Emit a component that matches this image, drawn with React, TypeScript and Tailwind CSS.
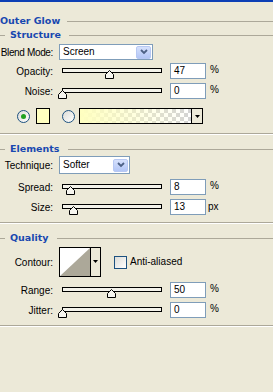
import React from "react";

const LABEL = "w-[53px] shrink-0 text-right whitespace-nowrap";

function Header({ title, lead, gap }: { title: string; lead?: boolean; gap: number }) {
  return (
    <div className="flex items-center h-[14px]">
      {lead && <div className="w-[5px] h-px bg-[#aca899] mr-[5px]" />}
      <span className="font-['DejaVu_Sans',Verdana,sans-serif] font-bold text-[9.5px] leading-none text-[#1848b0] whitespace-nowrap">
        {title}
      </span>
      <div className={gap === 7 ? "flex-1 h-px bg-[#aca899] ml-[7px]" : "flex-1 h-px bg-[#aca899] ml-[8px]"} />
    </div>
  );
}

function Thumb() {
  return (
    <svg width="9" height="9" viewBox="0 0 9 9" className="block">
      <path d="M0.5 8.5 V4.5 L4.5 0.5 L8.5 4.5 V8.5 Z" fill="#f6f5ef" stroke="#000" strokeWidth="1" />
    </svg>
  );
}

function Slider({ pos }: { pos: number }) {
  return (
    <div className="relative w-[100px] h-[16px] ml-[9px] shrink-0">
      <div className="mt-[5px] h-[5px] border border-black bg-[#f3f2ea]" />
      <div className="absolute top-[7px]" style={{ left: pos - 4 }}>
        <Thumb />
      </div>
    </div>
  );
}

function NumInput({ value }: { value: string }) {
  return (
    <div className="ml-[8px] w-[36px] h-[16px] shrink-0 border border-[#7f9db9] bg-white pl-[3px] flex items-center leading-none">
      {value}
    </div>
  );
}

function SliderRow({ label, pos, value, unit }: { label: string; pos: number; value: string; unit: string }) {
  return (
    <div className="flex items-center h-[16px]">
      <div className={LABEL}>{label}</div>
      <Slider pos={pos} />
      <NumInput value={value} />
      <span className={unit === "%" ? "ml-[4px] -mt-[3px] leading-none" : "ml-[2px] -mt-[1px] leading-none"}>{unit}</span>
    </div>
  );
}

function ComboArrow() {
  return (
    <div className="w-[15px] h-[13px] mr-px rounded-[2px] border border-[#b7c8f3] bg-gradient-to-b from-[#d6e1fc] to-[#b3c6f6] flex items-center justify-center">
      <svg width="8" height="6" viewBox="0 0 8 6">
        <path d="M1 1 L4 4 L7 1" fill="none" stroke="#4d6185" strokeWidth="1.8" />
      </svg>
    </div>
  );
}

function Select({ value, width, h }: { value: string; width: string; h: string }) {
  return (
    <div className={`ml-[6px] ${width} ${h} border border-[#7f9db9] bg-white flex items-center justify-between pl-[3px]`}>
      <span className="leading-none">{value}</span>
      <ComboArrow />
    </div>
  );
}

function Radio({ checked }: { checked?: boolean }) {
  return (
    <div className="w-[13px] h-[13px] rounded-full border border-[#1c5180] bg-gradient-to-br from-[#dcdcd7] to-white flex items-center justify-center shrink-0">
      {checked && <div className="w-[5px] h-[5px] rounded-full bg-[#21a121]" />}
    </div>
  );
}

function Separator() {
  return (
    <div className="flex flex-col">
      <div className="h-px bg-[#aca899]" />
      <div className="h-px bg-white" />
    </div>
  );
}

function TriDown() {
  return (
    <svg width="5" height="3" viewBox="0 0 5 3">
      <path d="M0 0 H5 L2.5 3 Z" fill="#000" />
    </svg>
  );
}

export default function App() {
  return (
    <div className="w-[273px] h-[392px] bg-[#ece9d8] overflow-hidden font-['Liberation_Sans',Arial,sans-serif] text-[10px] text-black flex flex-col">
      <div className="h-[2px] bg-[#0d3fb5]" />
      <div className="mt-[12px]">
        <Header title="Outer Glow" gap={7} />
      </div>
      <Header title="Structure" lead gap={8} />

      <div className="mt-[2px] flex items-center h-[16px]">
        <div className={`${LABEL} tracking-[-0.35px]`}>Blend Mode:</div>
        <Select value="Screen" width="w-[94px]" h="h-[16px]" />
      </div>

      <div className="mt-[3px]">
        <SliderRow label="Opacity:" pos={47} value="47" unit="%" />
      </div>
      <div className="mt-[4px]">
        <SliderRow label="Noise:" pos={0} value="0" unit="%" />
      </div>

      <div className="mt-[9px] h-[16px] flex items-center">
        <div className="ml-[17px]">
          <Radio checked />
        </div>
        <div className="ml-[6px] w-[14px] h-[16px] border border-black bg-[#ffffc0]" />
        <div className="ml-[12px]">
          <Radio />
        </div>
        <div className="ml-[4px] w-[124px] h-[16px] border border-black flex">
          <div className="flex-1 bg-[image:conic-gradient(#d4d4d4_25%,#ffffff_0_50%,#d4d4d4_0_75%,#ffffff_0)] bg-[length:8px_8px]">
            <div className="w-full h-full bg-gradient-to-r from-[#ffffc0] via-[#ffffc0]/50 to-transparent" />
          </div>
          <div className="w-[11px] border-l border-black bg-[#ece9d8] flex items-center justify-center">
            <TriDown />
          </div>
        </div>
      </div>

      <div className="mt-[9px]">
        <Separator />
      </div>

      <div className="mt-[7px]">
        <Header title="Elements" lead gap={8} />
      </div>
      <div className="flex items-center h-[18px]">
        <div className={LABEL}>Technique:</div>
        <Select value="Softer" width="w-[71px]" h="h-[18px]" />
      </div>

      <div className="mt-[5px]">
        <SliderRow label="Spread:" pos={8} value="8" unit="%" />
      </div>
      <div className="mt-[4px]">
        <SliderRow label="Size:" pos={11} value="13" unit="px" />
      </div>

      <div className="mt-[7px]">
        <Separator />
      </div>

      <div className="mt-[7px]">
        <Header title="Quality" lead gap={8} />
      </div>

      <div className="mt-[2px] flex items-center h-[30px]">
        <div className={LABEL}>Contour:</div>
        <div className="ml-[6px] w-[42px] h-[30px] border border-black flex">
          <div className="w-[30px] h-full bg-white">
            <svg width="30" height="28" viewBox="0 0 30 28" className="block">
              <path d="M0 28 L30 0 L30 28 Z" fill="#aca899" />
            </svg>
          </div>
          <div className="flex-1 border-l border-black bg-[#ece9d8] flex items-start justify-center pt-[12px]">
            <TriDown />
          </div>
        </div>
        <div className="ml-[13px] w-[13px] h-[13px] border border-[#1c5180] bg-gradient-to-br from-[#dcdcd7] to-white" />
        <span className="ml-[3px] leading-none">Anti-aliased</span>
      </div>

      <div className="mt-[5px]">
        <SliderRow label="Range:" pos={49} value="50" unit="%" />
      </div>
      <div className="mt-[4px]">
        <SliderRow label="Jitter:" pos={0} value="0" unit="%" />
      </div>

      <div className="mt-[7px]">
        <Separator />
      </div>
    </div>
  );
}
